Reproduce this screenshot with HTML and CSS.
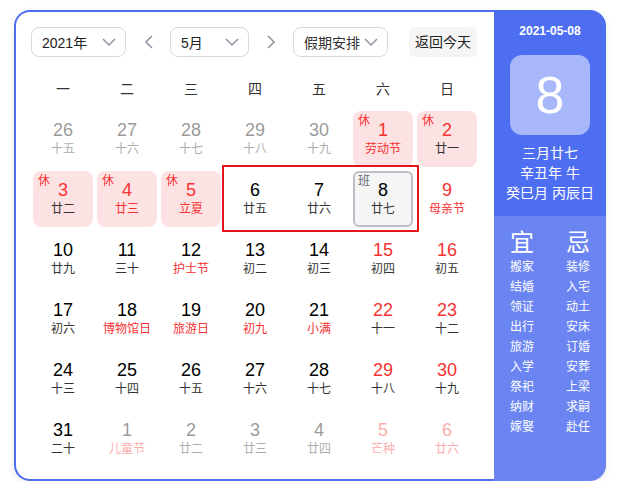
FILE: index.html
```html
<!DOCTYPE html>
<html lang="zh-CN">
<head>
<meta charset="utf-8">
<link rel="stylesheet" href="styles.css">
</head>
<body>
<div class="cal">
  <div class="main">
    <div class="controls">
      <div class="select sel-year"><span>2021年</span><svg class="down" viewBox="0 0 14 8"><path d="M1 1l6 6 6-6"/></svg></div>
      <div class="arrow"><svg viewBox="0 0 9 14"><path d="M8 1L2 7l6 6"/></svg></div>
      <div class="select sel-month"><span>5月</span><svg class="down" viewBox="0 0 14 8"><path d="M1 1l6 6 6-6"/></svg></div>
      <div class="arrow"><svg viewBox="0 0 9 14"><path d="M1 1l6 6-6 6"/></svg></div>
      <div class="select sel-holiday"><span>假期安排</span><svg class="down" viewBox="0 0 14 8"><path d="M1 1l6 6 6-6"/></svg></div>
      <div class="today">返回今天</div>
    </div>
    <div class="week">
      <span>一</span><span>二</span><span>三</span><span>四</span><span>五</span><span>六</span><span>日</span>
    </div>
    <div class="grid">
      <div class="cell other"><b>26</b><i>十五</i></div>
      <div class="cell other"><b>27</b><i>十六</i></div>
      <div class="cell other"><b>28</b><i>十七</i></div>
      <div class="cell other"><b>29</b><i>十八</i></div>
      <div class="cell other"><b>30</b><i>十九</i></div>
      <div class="cell rest"><em>休</em><b class="red">1</b><i class="red">劳动节</i></div>
      <div class="cell rest"><em>休</em><b class="red">2</b><i>廿一</i></div>

      <div class="cell rest"><em>休</em><b class="red">3</b><i>廿二</i></div>
      <div class="cell rest"><em>休</em><b class="red">4</b><i class="red">廿三</i></div>
      <div class="cell rest"><em>休</em><b class="red">5</b><i class="red">立夏</i></div>
      <div class="cell"><b>6</b><i>廿五</i></div>
      <div class="cell"><b>7</b><i>廿六</i></div>
      <div class="cell work selected"><em>班</em><b>8</b><i>廿七</i></div>
      <div class="cell"><b class="red">9</b><i class="red">母亲节</i></div>

      <div class="cell"><b>10</b><i>廿九</i></div>
      <div class="cell"><b>11</b><i>三十</i></div>
      <div class="cell"><b>12</b><i class="red">护士节</i></div>
      <div class="cell"><b>13</b><i>初二</i></div>
      <div class="cell"><b>14</b><i>初三</i></div>
      <div class="cell"><b class="red">15</b><i>初四</i></div>
      <div class="cell"><b class="red">16</b><i>初五</i></div>

      <div class="cell"><b>17</b><i>初六</i></div>
      <div class="cell"><b>18</b><i class="red">博物馆日</i></div>
      <div class="cell"><b>19</b><i class="red">旅游日</i></div>
      <div class="cell"><b>20</b><i class="red">初九</i></div>
      <div class="cell"><b>21</b><i class="red">小满</i></div>
      <div class="cell"><b class="red">22</b><i>十一</i></div>
      <div class="cell"><b class="red">23</b><i>十二</i></div>

      <div class="cell"><b>24</b><i>十三</i></div>
      <div class="cell"><b>25</b><i>十四</i></div>
      <div class="cell"><b>26</b><i>十五</i></div>
      <div class="cell"><b>27</b><i>十六</i></div>
      <div class="cell"><b>28</b><i>十七</i></div>
      <div class="cell"><b class="red">29</b><i>十八</i></div>
      <div class="cell"><b class="red">30</b><i>十九</i></div>

      <div class="cell"><b>31</b><i>二十</i></div>
      <div class="cell other"><b>1</b><i class="red">儿童节</i></div>
      <div class="cell other"><b>2</b><i>廿二</i></div>
      <div class="cell other"><b>3</b><i>廿三</i></div>
      <div class="cell other"><b>4</b><i>廿四</i></div>
      <div class="cell other"><b class="red">5</b><i class="red">芒种</i></div>
      <div class="cell other"><b class="red">6</b><i class="red">廿六</i></div>

      <div class="highlight"></div>
    </div>
  </div>
  <div class="side">
    <div class="side-top">
      <div class="date">2021-05-08</div>
      <div class="bigday">8</div>
      <div class="lunar">三月廿七</div>
      <div class="lunar">辛丑年 牛</div>
      <div class="lunar">癸巳月 丙辰日</div>
    </div>
    <div class="side-bottom">
      <div class="col">
        <div class="head">宜</div>
        <div>搬家</div><div>结婚</div><div>领证</div><div>出行</div><div>旅游</div><div>入学</div><div>祭祀</div><div>纳财</div><div>嫁娶</div>
      </div>
      <div class="col">
        <div class="head">忌</div>
        <div>装修</div><div>入宅</div><div>动土</div><div>安床</div><div>订婚</div><div>安葬</div><div>上梁</div><div>求嗣</div><div>赴任</div>
      </div>
    </div>
  </div>
</div>
</body>
</html>
```

FILE: styles.css
```css
* { box-sizing: border-box; }
html, body { margin: 0; background: #fff; }
body {
  padding: 10px 0 0 14px;
  font-family: "Liberation Sans", Arial, "Noto Sans CJK SC", sans-serif;
  color: #222;
}
.cal {
  display: flex;
  width: 592px;
  height: 471px;
  border-radius: 16px;
  box-shadow: 0 2px 8px rgba(0, 0, 0, 0.08);
}
.main {
  width: 480px;
  border: 2px solid #4e6ef2;
  border-right: none;
  border-radius: 16px 0 0 16px;
  padding: 15px 0 0 15px;
}
.controls {
  display: flex;
  align-items: center;
  height: 30px;
}
.select {
  display: flex;
  align-items: center;
  justify-content: space-between;
  height: 30px;
  border: 1px solid #d7d9e0;
  border-radius: 8px;
  padding: 0 9px 0 10px;
  font-size: 14px;
  color: #222;
}
.sel-year { width: 95px; }
.sel-month { width: 79px; }
.sel-holiday { width: 95px; color: #333; }
.down {
  width: 14px;
  height: 8px;
  fill: none;
  stroke: #9195a3;
  stroke-width: 1.5;
}
.arrow {
  width: 44px;
  display: flex;
  justify-content: center;
}
.arrow svg {
  width: 9px;
  height: 14px;
  fill: none;
  stroke: #9195a3;
  stroke-width: 1.6;
}
.today {
  margin-left: 21px;
  width: 68px;
  height: 30px;
  line-height: 30px;
  text-align: center;
  background: #f5f5f6;
  border-radius: 6px;
  font-size: 14px;
  color: #222;
}
.week {
  display: grid;
  grid-template-columns: repeat(7, 64px);
  margin-top: 14px;
  height: 36px;
  line-height: 36px;
  text-align: center;
  font-size: 14px;
  color: #333;
}
.grid {
  position: relative;
  display: grid;
  grid-template-columns: repeat(7, 64px);
  grid-auto-rows: 60px;
  margin-top: 2px;
}
.cell {
  position: relative;
  margin: 2px;
  border-radius: 8px;
  display: flex;
  flex-direction: column;
  align-items: center;
  padding-top: 8px;
}
.cell b {
  font-weight: normal;
  font-size: 18px;
  line-height: 22px;
  color: #000;
}
.cell i {
  font-style: normal;
  font-size: 12px;
  line-height: 16px;
  margin-top: 0;
  color: #333;
}
.cell .red { color: #f73131; }
.cell em {
  position: absolute;
  left: 5px;
  top: 2px;
  font-style: normal;
  font-size: 12px;
  line-height: 16px;
}
.rest { background: #fde2e3; }
.rest em { color: #f73131; }
.work {
  background: #f5f5f6;
  border: 2px solid #bdbfc8;
  border-radius: 6px;
  padding-top: 6px;
}
.work em {
  left: 3px;
  top: 0;
  color: #626675;
}
.other { opacity: 0.4; }
.highlight {
  position: absolute;
  left: 191px;
  top: 56px;
  width: 197px;
  height: 67px;
  border: 2px solid #e4141b;
  pointer-events: none;
}
.side {
  width: 112px;
  border-radius: 0 16px 16px 0;
  overflow: hidden;
  display: flex;
  flex-direction: column;
  color: #fff;
}
.side-top {
  height: 206px;
  background: #4e6ef2;
  display: flex;
  flex-direction: column;
  align-items: center;
  padding-top: 11px;
}
.date {
  font-size: 12px;
  font-weight: bold;
  line-height: 20px;
}
.bigday {
  margin-top: 14px;
  width: 80px;
  height: 80px;
  border-radius: 12px;
  background: rgba(255, 255, 255, 0.5);
  font-size: 52px;
  line-height: 80px;
  text-align: center;
  margin-bottom: 8px;
}
.lunar {
  font-size: 14px;
  line-height: 20px;
}
.side-bottom {
  flex: 1;
  background: #6a84f1;
  display: flex;
  padding-top: 13px;
}
.col {
  width: 56px;
  text-align: center;
  font-size: 12px;
  line-height: 20px;
}
.col .head {
  font-size: 24px;
  line-height: 28px;
}
```
